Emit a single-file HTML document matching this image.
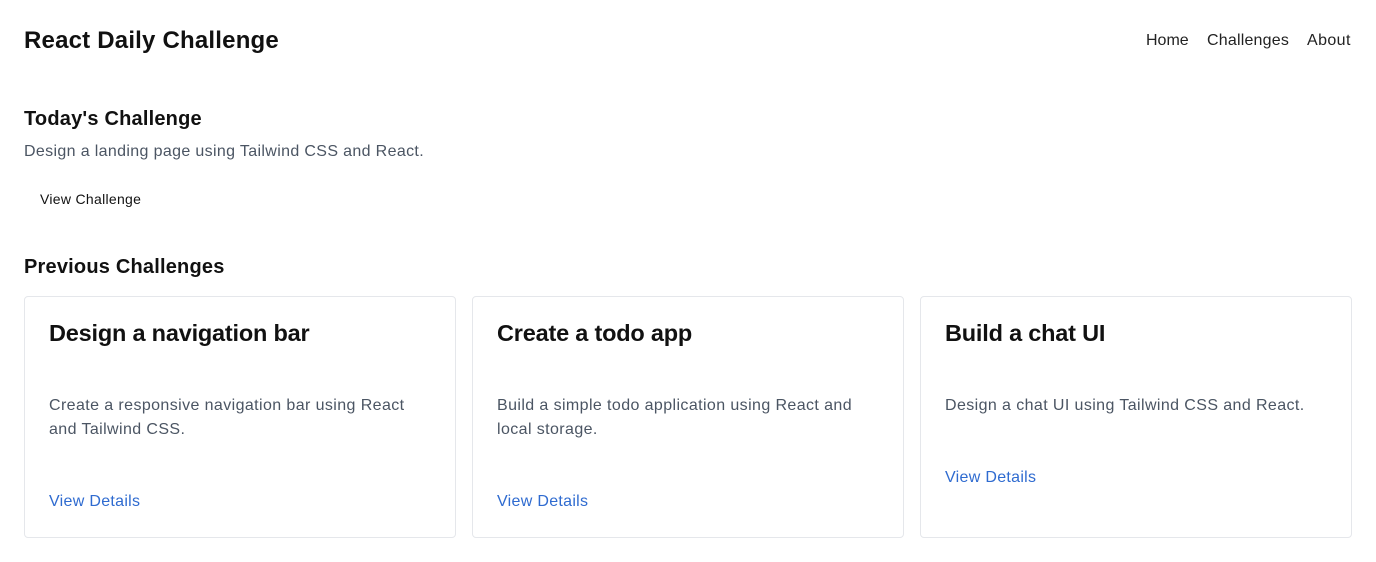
<!DOCTYPE html>
<html><head><style>
*{box-sizing:border-box;margin:0;padding:0}
body{width:1376px;height:562px;background:#fff;font-family:"Liberation Sans",sans-serif;color:#111;position:relative;overflow:hidden}
.t{position:absolute;white-space:nowrap}
.card{position:absolute;top:296px;width:432px;height:242px;border:1px solid #e5e7eb;border-radius:4px;padding:20px 24px 24px 24px}
.card h3{font-size:23.5px;line-height:32px;font-weight:600;color:#111;letter-spacing:-0.2px}
.card p{margin-top:45px;font-size:16px;line-height:24px;color:#4b5563;white-space:nowrap;letter-spacing:0.4px}
.card a{display:block;margin-top:48px;font-size:16px;line-height:24px;color:#2f6bd0;text-decoration:none;letter-spacing:0.3px}
</style></head><body>
<div class="t" style="left:24px;top:27px;font-size:24px;font-weight:700;line-height:28px;letter-spacing:0.2px">React Daily Challenge</div>
<div class="t" style="left:1146px;top:31px;font-size:16px;line-height:20px;color:#222">Home</div>
<div class="t" style="left:1207px;top:31px;font-size:16px;line-height:20px;color:#222;letter-spacing:0.2px">Challenges</div>
<div class="t" style="left:1307px;top:31px;font-size:16px;line-height:20px;color:#222;letter-spacing:0.4px">About</div>
<div class="t" style="left:24px;top:107px;font-size:20px;font-weight:700;line-height:24px;letter-spacing:0.2px">Today's Challenge</div>
<div class="t" style="left:24px;top:142px;font-size:16px;line-height:20px;color:#4b5563;letter-spacing:0.35px">Design a landing page using Tailwind CSS and React.</div>
<div class="t" style="left:40px;top:190px;font-size:14px;line-height:18px;color:#111;letter-spacing:0.3px">View Challenge</div>
<div class="t" style="left:24px;top:255px;font-size:20px;font-weight:700;line-height:24px;letter-spacing:0.2px">Previous Challenges</div>
<div class="card" style="left:24px"><h3>Design a navigation bar</h3><p>Create a responsive navigation bar using React<br>and Tailwind CSS.</p><a>View Details</a></div>
<div class="card" style="left:472px"><h3>Create a todo app</h3><p>Build a simple todo application using React and<br>local storage.</p><a>View Details</a></div>
<div class="card" style="left:920px"><h3>Build a chat UI</h3><p>Design a chat UI using Tailwind CSS and React.</p><a>View Details</a></div>
</body></html>
